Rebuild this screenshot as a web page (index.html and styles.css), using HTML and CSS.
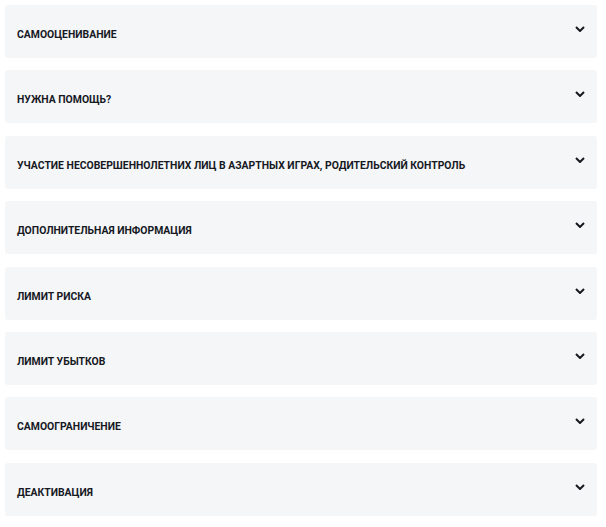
FILE: index.html
```html
<!DOCTYPE html>
<html lang="ru">

<head>
    <meta charset="UTF-8">
    <meta name="viewport" content="width=device-width, initial-scale=1.0">
    <title>Ответственная игра</title>
    <link rel="stylesheet" href="styles.css">
</head>

<body>
    <div class="accordion">
        <div class="acc-item">
            <span class="acc-title">Самооценивание</span>
            <svg class="acc-arrow" viewBox="0 0 10 6"><path d="M1 1l4 4 4-4"/></svg>
        </div>
        <div class="acc-item">
            <span class="acc-title">Нужна помощь?</span>
            <svg class="acc-arrow" viewBox="0 0 10 6"><path d="M1 1l4 4 4-4"/></svg>
        </div>
        <div class="acc-item">
            <span class="acc-title">Участие несовершеннолетних лиц в азартных играх, родительский контроль</span>
            <svg class="acc-arrow" viewBox="0 0 10 6"><path d="M1 1l4 4 4-4"/></svg>
        </div>
        <div class="acc-item">
            <span class="acc-title">Дополнительная информация</span>
            <svg class="acc-arrow" viewBox="0 0 10 6"><path d="M1 1l4 4 4-4"/></svg>
        </div>
        <div class="acc-item">
            <span class="acc-title">Лимит риска</span>
            <svg class="acc-arrow" viewBox="0 0 10 6"><path d="M1 1l4 4 4-4"/></svg>
        </div>
        <div class="acc-item">
            <span class="acc-title">Лимит убытков</span>
            <svg class="acc-arrow" viewBox="0 0 10 6"><path d="M1 1l4 4 4-4"/></svg>
        </div>
        <div class="acc-item">
            <span class="acc-title">Самоограничение</span>
            <svg class="acc-arrow" viewBox="0 0 10 6"><path d="M1 1l4 4 4-4"/></svg>
        </div>
        <div class="acc-item">
            <span class="acc-title">Деактивация</span>
            <svg class="acc-arrow" viewBox="0 0 10 6"><path d="M1 1l4 4 4-4"/></svg>
        </div>
    </div>
</body>

</html>
```

FILE: styles.css
```css
* {
    margin: 0;
    padding: 0;
    box-sizing: border-box;
}

body {
    font-family: Roboto, "Liberation Sans", sans-serif;
    background-color: #fff;
    color: #16191f;
    padding: 5px 9px 0 5px;
}

.accordion {
    display: flex;
    flex-direction: column;
    gap: 12.4px;
}

.acc-item {
    height: 53px;
    background-color: #f5f6f8;
    border-radius: 3px;
    display: flex;
    justify-content: space-between;
    align-items: flex-start;
    padding: 0 12px 0 12px;
    cursor: pointer;
}

.acc-title {
    font-size: 10.4px;
    font-weight: 700;
    line-height: 12px;
    text-transform: uppercase;
    padding-top: 24px;
}

.acc-arrow {
    width: 10px;
    height: 6px;
    margin-top: 21px;
    fill: none;
    stroke: #16191f;
    stroke-width: 2;
}
```
